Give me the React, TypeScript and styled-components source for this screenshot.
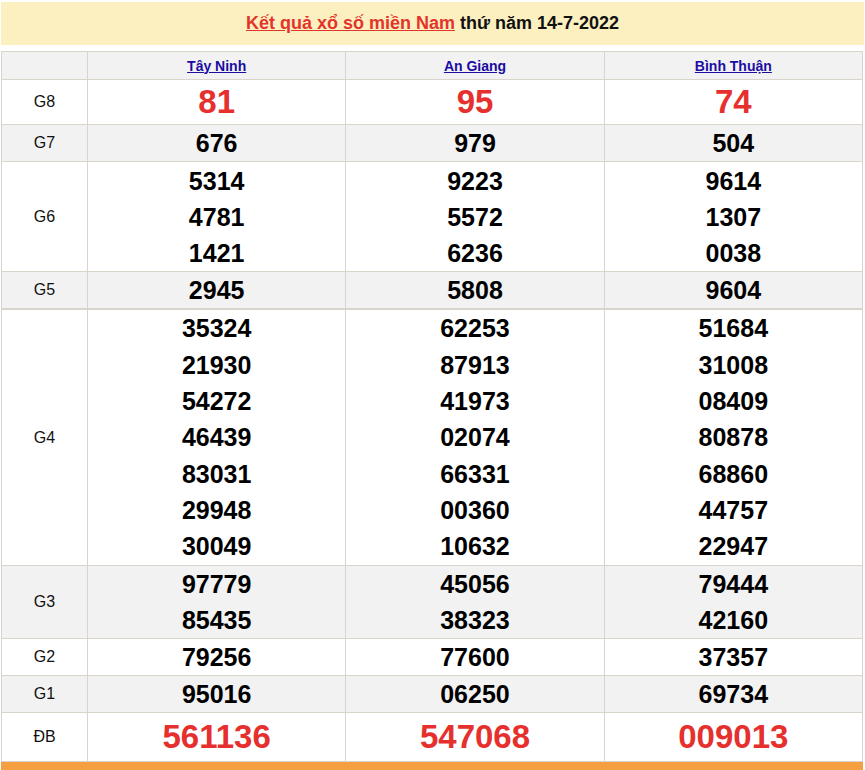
import styled, { createGlobalStyle } from 'styled-components';

const GlobalStyle = createGlobalStyle`
  body {
    margin: 0;
    background: #fff;
    font-family: 'Liberation Sans', Arial, sans-serif;
  }
`;

const Page = styled.div`
  width: 865px;
  padding: 2px 1px 0 1px;
  box-sizing: border-box;
  display: flex;
  flex-direction: column;
`;

const Banner = styled.div`
  height: 43px;
  background: #fdf0c0;
  display: flex;
  align-items: center;
  justify-content: center;
  gap: 5px;
  font-size: 18px;
  font-weight: 700;
  color: #111;
  margin-bottom: 6px;
`;

const TitleLink = styled.a`
  color: #e3342c;
  text-decoration: underline;
`;

const Table = styled.table`
  width: 862px;
  border-collapse: collapse;
  table-layout: fixed;
  border: 1px solid #d9d5cd;
`;

const HeadRow = styled.tr`
  background: #f2f2f2;
`;

const Row = styled.tr<{ $alt?: boolean; $thick?: boolean }>`
  background: ${(p) => (p.$alt ? '#f2f2f2' : '#fff')};
  td {
    border-top: ${(p) => (p.$thick ? '2px' : '1px')} solid #d9d5cd;
  }
`;

const HeadCell = styled.th<{ $w?: number }>`
  ${(p) => (p.$w ? `width: ${p.$w}px;` : '')}
  height: 27px;
  border: 1px solid #d9d5cd;
  font-size: 14px;
  font-weight: 700;
  text-align: center;
  vertical-align: middle;
  padding: 0;
`;

const ProvinceLink = styled.a`
  color: #1b0ca3;
  text-decoration: underline;
`;

const Label = styled.td`
  border: 1px solid #d9d5cd;
  text-align: center;
  font-size: 16px;
  color: #111;
  padding: 0;
`;

const Cell = styled.td<{ $h: number }>`
  height: ${(p) => p.$h}px;
  border: 1px solid #d9d5cd;
  text-align: center;
  vertical-align: middle;
  padding: 0;
`;

const Num = styled.div<{ $big?: boolean; $lh: number }>`
  font-weight: 700;
  font-size: ${(p) => (p.$big ? '33px' : '25px')};
  line-height: ${(p) => p.$lh}px;
  color: ${(p) => (p.$big ? '#e5302e' : '#000')};
`;

const Footer = styled.div`
  height: 10px;
  background: #f4a040;
  width: 862px;
`;

type Prize = {
  label: string;
  h: number;
  lh: number;
  alt?: boolean;
  big?: boolean;
  thick?: boolean;
  cols: string[][];
};

const provinces = ['Tây Ninh', 'An Giang', 'Bình Thuận'];

const prizes: Prize[] = [
  { label: 'G8', h: 44, lh: 44, big: true, cols: [['81'], ['95'], ['74']] },
  { label: 'G7', h: 36, lh: 36, alt: true, cols: [['676'], ['979'], ['504']] },
  {
    label: 'G6',
    h: 109,
    lh: 36,
    cols: [
      ['5314', '4781', '1421'],
      ['9223', '5572', '6236'],
      ['9614', '1307', '0038'],
    ],
  },
  { label: 'G5', h: 36, lh: 36, alt: true, cols: [['2945'], ['5808'], ['9604']] },
  {
    label: 'G4',
    h: 255,
    lh: 36.3,
    thick: true,
    cols: [
      ['35324', '21930', '54272', '46439', '83031', '29948', '30049'],
      ['62253', '87913', '41973', '02074', '66331', '00360', '10632'],
      ['51684', '31008', '08409', '80878', '68860', '44757', '22947'],
    ],
  },
  {
    label: 'G3',
    h: 71,
    lh: 36,
    alt: true,
    cols: [
      ['97779', '85435'],
      ['45056', '38323'],
      ['79444', '42160'],
    ],
  },
  { label: 'G2', h: 36, lh: 36, cols: [['79256'], ['77600'], ['37357']] },
  { label: 'G1', h: 36, lh: 36, alt: true, cols: [['95016'], ['06250'], ['69734']] },
  { label: 'ĐB', h: 48, lh: 44, big: true, cols: [['561136'], ['547068'], ['009013']] },
];

const App = () => {
  return (
    <>
      <GlobalStyle />
      <Page>
        <Banner>
          <TitleLink href="#">Kết quả xổ số miền Nam</TitleLink>
          <span>thứ năm 14-7-2022</span>
        </Banner>
        <Table>
          <thead>
            <HeadRow>
              <HeadCell $w={85} />
              {provinces.map((p) => (
                <HeadCell key={p}>
                  <ProvinceLink href="#">{p}</ProvinceLink>
                </HeadCell>
              ))}
            </HeadRow>
          </thead>
          <tbody>
            {prizes.map((prize) => (
              <Row key={prize.label} $alt={prize.alt} $thick={prize.thick}>
                <Label>{prize.label}</Label>
                {prize.cols.map((nums, i) => (
                  <Cell key={i} $h={prize.h}>
                    {nums.map((n, j) => (
                      <Num key={j} $big={prize.big} $lh={prize.lh}>
                        {n}
                      </Num>
                    ))}
                  </Cell>
                ))}
              </Row>
            ))}
          </tbody>
        </Table>
        <Footer />
      </Page>
    </>
  );
};

export default App;
